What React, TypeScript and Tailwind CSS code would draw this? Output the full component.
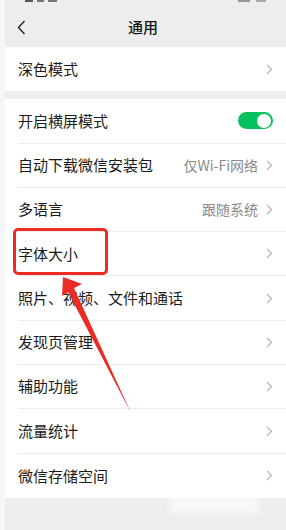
import React from "react";

const font = { fontFamily: '"Noto Sans CJK SC", "Noto Sans", sans-serif' };

const Chevron = () => (
  <svg width="7" height="11" viewBox="0 0 7 11" className="shrink-0">
    <path d="M1 1l4.5 4.5L1 10" fill="none" stroke="#b5b5b5" strokeWidth="1.2" />
  </svg>
);

interface RowProps {
  label: string;
  value?: string;
  toggle?: boolean;
  last?: boolean;
}

const Row = ({ label, value, toggle, last }: RowProps) => (
  <div className="h-[44.3px] pl-[13px] flex">
    <div
      className={`flex-1 flex items-center justify-between pr-[13px] ${
        last ? "" : "border-b border-[#ececec]"
      }`}
    >
      <span className="text-[15px] text-[#1b1b1b]">{label}</span>
      {toggle ? (
        <div className="w-[35px] h-[17px] rounded-full bg-[#07c160] flex items-center justify-end pr-[2px]">
          <div className="w-[14px] h-[14px] rounded-full bg-white" />
        </div>
      ) : (
        <div className="flex items-center gap-[8px]">
          {value && <span className="text-[14px] text-[#8a8a8a]">{value}</span>}
          <Chevron />
        </div>
      )}
    </div>
  </div>
);

const rows: RowProps[] = [
  { label: "开启横屏模式", toggle: true },
  { label: "自动下载微信安装包", value: "仅Wi-Fi网络" },
  { label: "多语言", value: "跟随系统" },
  { label: "字体大小" },
  { label: "照片、视频、文件和通话" },
  { label: "发现页管理" },
  { label: "辅助功能" },
  { label: "流量统计" },
  { label: "微信存储空间", last: true },
];

export default function App() {
  return (
    <div className="relative w-[286px] h-[530px] overflow-hidden flex bg-[#ededed]" style={font}>
      <div className="w-[5px] bg-[#f6f6f6]" />
      <div className="flex-1 flex flex-col">
        {/* status bar, mostly cropped */}
        <div className="h-[8px] flex items-start justify-between px-[20px]">
          <div className="flex gap-[4px]">
            <div className="w-[8px] h-[2px] bg-[#555]" />
            <div className="w-[7px] h-[2px] bg-[#777]" />
            <div className="w-[9px] h-[2px] bg-[#777]" />
          </div>
          <div className="flex gap-[6px]">
            <div className="w-[12px] h-[2px] bg-[#999]" />
            <div className="w-[10px] h-[2px] bg-[#aaa]" />
          </div>
        </div>

        {/* header */}
        <div className="h-[39px] relative flex items-center justify-center">
          <svg width="9" height="15" viewBox="0 0 9 15" className="absolute left-[12px] top-[12px]">
            <path d="M7.5 1L1.5 7.5l6 6.5" fill="none" stroke="#1b1b1b" strokeWidth="1.3" />
          </svg>
          <span className="text-[15px] font-medium text-[#111] pr-[5px]">通用</span>
        </div>

        <div className="bg-white">
          <Row label="深色模式" last />
        </div>

        <div className="h-[8px]" />

        <div className="bg-white">
          {rows.map((r) => (
            <Row key={r.label} {...r} />
          ))}
        </div>
      </div>

      {/* red highlight box */}
      <div className="absolute left-[13px] top-[228px] w-[95px] h-[47px] border-[3px] border-[#ec2b24] rounded-[5px]" />

      {/* red arrow */}
      <svg className="absolute left-0 top-0" width="286" height="530" viewBox="0 0 286 530">
        <polygon
          points="63,277 82,284 74,288 131,413 68,292 62,296"
          fill="#ec2b24"
        />
      </svg>

      {/* faint watermark residue */}
      <div className="absolute left-[170px] top-[478px] w-[88px] h-[36px] bg-white/60 blur-[3px]" />
    </div>
  );
}
